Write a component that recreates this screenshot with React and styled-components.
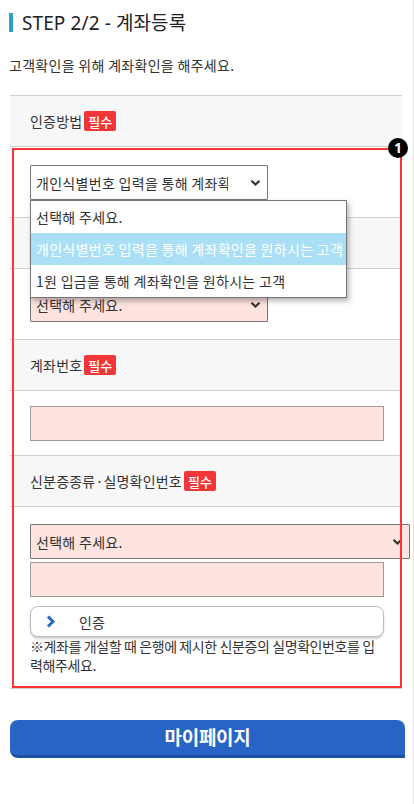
import React from "react";
import styled, { createGlobalStyle } from "styled-components";

const Global = createGlobalStyle`
  html, body { margin: 0; padding: 0; background: #fff; }
  body { font-family: "Noto Sans CJK KR", "Noto Sans", sans-serif; color: #333; }
  * { box-sizing: border-box; }
`;

const Page = styled.div`
  width: 414px;
  min-height: 804px;
  padding: 0 0 40px 0;
  border-right: 1px solid #e2e2e2;
`;

const Title = styled.h2`
  display: flex;
  align-items: center;
  gap: 9px;
  margin: 0;
  padding: 10px 0 0 9px;
  height: 34px;
  font-family: "Noto Sans", "Noto Sans CJK KR", sans-serif;
  font-weight: 400;
  font-size: 19px;
  letter-spacing: 0.1px;
  color: #222;
`;

const TitleBar = styled.span`
  width: 4px;
  height: 19px;
  background: #2f9fc4;
`;

const Desc = styled.p`
  margin: 22px 0 0 9px;
  font-size: 14px;
  letter-spacing: 0.3px;
  line-height: 18px;
  color: #333;
`;

const Form = styled.div`
  position: relative;
  margin: 21px 11px 0 10px;
  border-top: 1px solid #cfcfcf;
`;

const LabelRow = styled.div`
  display: flex;
  align-items: center;
  height: 51px;
  padding: 0 0 0 20px;
  background: #f7f7f7;
  border-bottom: 1px solid #cfcfcf;
  font-size: 14px;
  letter-spacing: 0.2px;
  color: #333;
`;

const Badge = styled.span`
  display: inline-flex;
  align-items: center;
  justify-content: center;
  height: 20px;
  margin-left: 2px;
  padding: 0 4px;
  border-radius: 2px;
  background: #f03636;
  color: #fff;
  font-size: 13px;
  font-weight: 500;
  letter-spacing: 0;
`;

const FieldRow = styled.div`
  display: flex;
  flex-direction: column;
  align-items: flex-start;
  padding: ${(p) => p.$pad || "18px 0 17px 20px"};
  border-bottom: 1px solid #cfcfcf;
  background: #fff;
`;

const SelectWrap = styled.div`
  position: relative;
`;

const Select = styled.div`
  display: flex;
  align-items: center;
  justify-content: space-between;
  width: ${(p) => p.$w}px;
  height: 35px;
  padding: 0 6px 0 5px;
  border: 1px solid #767676;
  border-radius: 1px;
  background: ${(p) => (p.$pink ? "#fee3df" : "#fff")};
  font-size: 14px;
  letter-spacing: 0.3px;
  color: #333;
`;

const SelectText = styled.span`
  display: block;
  width: ${(p) => p.$clip}px;
  overflow: hidden;
  white-space: nowrap;
`;

const Chevron = () => (
  <svg width="11" height="8" viewBox="0 0 11 8">
    <path d="M1.5 1.8 L5.5 5.6 L9.5 1.8" fill="none" stroke="#333" strokeWidth="2.2" />
  </svg>
);

const Dropdown = styled.ul`
  position: absolute;
  top: 35px;
  left: 0;
  z-index: 3;
  width: 317px;
  margin: 0;
  padding: 0;
  list-style: none;
  background: #fff;
  border: 1px solid #767676;
  box-shadow: 2px 3px 5px rgba(0, 0, 0, 0.3);
`;

const Option = styled.li`
  height: 32px;
  display: flex;
  align-items: center;
  padding-left: 5px;
  white-space: nowrap;
  overflow: hidden;
  font-size: 14px;
  letter-spacing: 0.3px;
  color: ${(p) => (p.$active ? "#fff" : "#333")};
  background: ${(p) => (p.$active ? "#abdff5" : "#fff")};
`;

const Input = styled.div`
  width: 354px;
  height: 35px;
  border: 1px solid #9a9a9a;
  background: #fee3df;
`;

const StackGap = styled.div`
  height: ${(p) => p.$h}px;
`;

const AuthButton = styled.button`
  display: flex;
  align-items: center;
  gap: 24px;
  width: 354px;
  height: 31px;
  padding: 0 0 0 15px;
  border: 1px solid #bdbdbd;
  border-radius: 8px;
  background: #fff;
  box-shadow: 0 2px 2px rgba(0, 0, 0, 0.18);
  font-family: inherit;
  font-size: 14px;
  letter-spacing: 0.2px;
  color: #333;
`;

const Note = styled.p`
  margin: 0;
  width: 352px;
  font-size: 14px;
  line-height: 19px;
  letter-spacing: -0.4px;
  color: #333;
  word-break: break-all;
`;

const Highlight = styled.div`
  position: absolute;
  top: 52px;
  left: 2px;
  right: 0;
  bottom: 1px;
  border: 2px solid #ff3333;
  pointer-events: none;
  z-index: 4;
`;

const Marker = styled.div`
  position: absolute;
  top: 42px;
  left: 378px;
  width: 20px;
  height: 20px;
  border-radius: 50%;
  background: #000;
  color: #fff;
  font-family: "Noto Sans", sans-serif;
  font-weight: 700;
  font-size: 14px;
  line-height: 20px;
  text-align: center;
  z-index: 5;
`;

const MyPage = styled.button`
  display: block;
  width: 395px;
  height: 38px;
  margin: 31px 0 0 10px;
  padding: 0 0 2px 0;
  border: none;
  border-bottom: 3px solid #1c4fa6;
  border-radius: 8px 8px 0 8px;
  background: #2864c5;
  color: #fff;
  font-family: "Noto Sans CJK KR", sans-serif;
  font-weight: 700;
  font-size: 19px;
  letter-spacing: -0.3px;
`;

export default function App() {
  return (
    <Page>
      <Global />
      <Title>
        <TitleBar />
        STEP 2/2 - 계좌등록
      </Title>
      <Desc>고객확인을 위해 계좌확인을 해주세요.</Desc>
      <Form>
        <LabelRow>
          인증방법 <Badge>필수</Badge>
        </LabelRow>
        <FieldRow>
          <SelectWrap>
            <Select $w={238}>
              <SelectText $clip={192}>개인식별번호 입력을 통해 계좌확인을 원하시는 고객</SelectText>
              <Chevron />
            </Select>
            <Dropdown>
              <Option>선택해 주세요.</Option>
              <Option $active>개인식별번호 입력을 통해 계좌확인을 원하시는 고객</Option>
              <Option>1원 입금을 통해 계좌확인을 원하시는 고객</Option>
            </Dropdown>
          </SelectWrap>
        </FieldRow>
        <LabelRow />
        <FieldRow>
          <Select $w={238} $pink>
            <SelectText $clip={200}>선택해 주세요.</SelectText>
            <Chevron />
          </Select>
        </FieldRow>
        <LabelRow>
          계좌번호 <Badge>필수</Badge>
        </LabelRow>
        <FieldRow $pad="15px 0 14px 20px">
          <Input />
        </FieldRow>
        <LabelRow>
          신분증종류·실명확인번호 <Badge>필수</Badge>
        </LabelRow>
        <FieldRow $pad="17px 0 13px 20px">
          <Select $w={380} $pink>
            <SelectText $clip={340}>선택해 주세요.</SelectText>
            <Chevron />
          </Select>
          <StackGap $h={3} />
          <Input />
          <StackGap $h={9} />
          <AuthButton>
            <svg width="9" height="13" viewBox="0 0 9 13">
              <path d="M2 1.5 L7 6.5 L2 11.5" fill="none" stroke="#2a66c4" strokeWidth="3" />
            </svg>
            인증
          </AuthButton>
          <Note>※계좌를 개설할 때 은행에 제시한 신분증의 실명확인번호를 입력해주세요.</Note>
        </FieldRow>
        <Highlight />
        <Marker>1</Marker>
      </Form>
      <MyPage>마이페이지</MyPage>
    </Page>
  );
}
